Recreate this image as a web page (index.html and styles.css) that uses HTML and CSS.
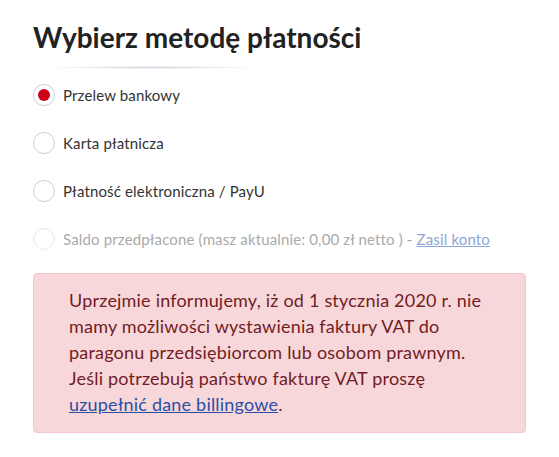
FILE: index.html
```html
<!DOCTYPE html>
<html>
<head>
    <meta name="viewport" content="width=device-width,initial-scale=1.0">
    <title>Metoda płatności</title>
    <link rel="stylesheet" href="styles.css">
</head>
<body>
    <div class="payment">
        <h2 class="payment-title">Wybierz metodę płatności</h2>

        <div class="methods">
            <label class="method">
                <input type="radio" name="method" checked>
                <span class="radio"></span>
                <span>Przelew bankowy</span>
            </label>
            <label class="method">
                <input type="radio" name="method">
                <span class="radio"></span>
                <span>Karta płatnicza</span>
            </label>
            <label class="method">
                <input type="radio" name="method">
                <span class="radio"></span>
                <span>Płatność elektroniczna / PayU</span>
            </label>
            <label class="method disabled">
                <input type="radio" name="method" disabled>
                <span class="radio"></span>
                <span>Saldo przedpłacone (masz aktualnie: 0,00 zł netto ) - <a href="#">Zasil konto</a></span>
            </label>
        </div>

        <div class="alert">
            Uprzejmie informujemy, iż od 1 stycznia 2020 r. nie mamy możliwości wystawienia faktury VAT do paragonu przedsiębiorcom lub osobom prawnym. Jeśli potrzebują państwo fakturę VAT proszę <a href="#">uzupełnić dane billingowe</a>.
        </div>
    </div>
</body>
</html>
```

FILE: styles.css
```css
* {
    margin: 0;
    padding: 0;
    box-sizing: border-box;
}

body {
    background: #fff;
    font-family: "Lato", sans-serif;
    color: #333;
}

.payment {
    padding: 20px 33px 0;
}

.payment-title {
    position: relative;
    font-size: 28px;
    font-weight: 700;
    color: #222;
    padding-bottom: 19px;
}

.payment-title::after {
    content: "";
    position: absolute;
    left: 7px;
    bottom: 4px;
    width: 225px;
    height: 3px;
    border-radius: 50%;
    background: radial-gradient(ellipse at center, rgba(120, 135, 160, 0.35), rgba(120, 135, 160, 0) 70%);
}

.methods {
    display: flex;
    flex-direction: column;
    gap: 26px;
    margin-top: 11px;
}

.method {
    display: flex;
    align-items: center;
    gap: 8px;
    font-size: 15px;
    letter-spacing: 0.15px;
    height: 22px;
    cursor: pointer;
}

.method input {
    display: none;
}

.radio {
    width: 22px;
    height: 22px;
    border: 1px solid #c6d1e0;
    border-radius: 50%;
    display: flex;
    align-items: center;
    justify-content: center;
    flex-shrink: 0;
}

.method input:checked + .radio::after {
    content: "";
    width: 12px;
    height: 12px;
    border-radius: 50%;
    background: #d0021b;
}

.method.disabled {
    color: #aaa;
    cursor: default;
}

.method.disabled .radio {
    border-color: #e3e9f2;
}

.method.disabled a {
    color: #8fa4d8;
}

.alert {
    margin-top: 23px;
    background: #f8d7da;
    border: 1px solid #f5c6cb;
    border-radius: 4px;
    color: #721c24;
    font-size: 18px;
    letter-spacing: 0.2px;
    line-height: 26px;
    padding: 13px 36px 15px 35px;
}

.alert a {
    color: #2a4fa5;
}
```
